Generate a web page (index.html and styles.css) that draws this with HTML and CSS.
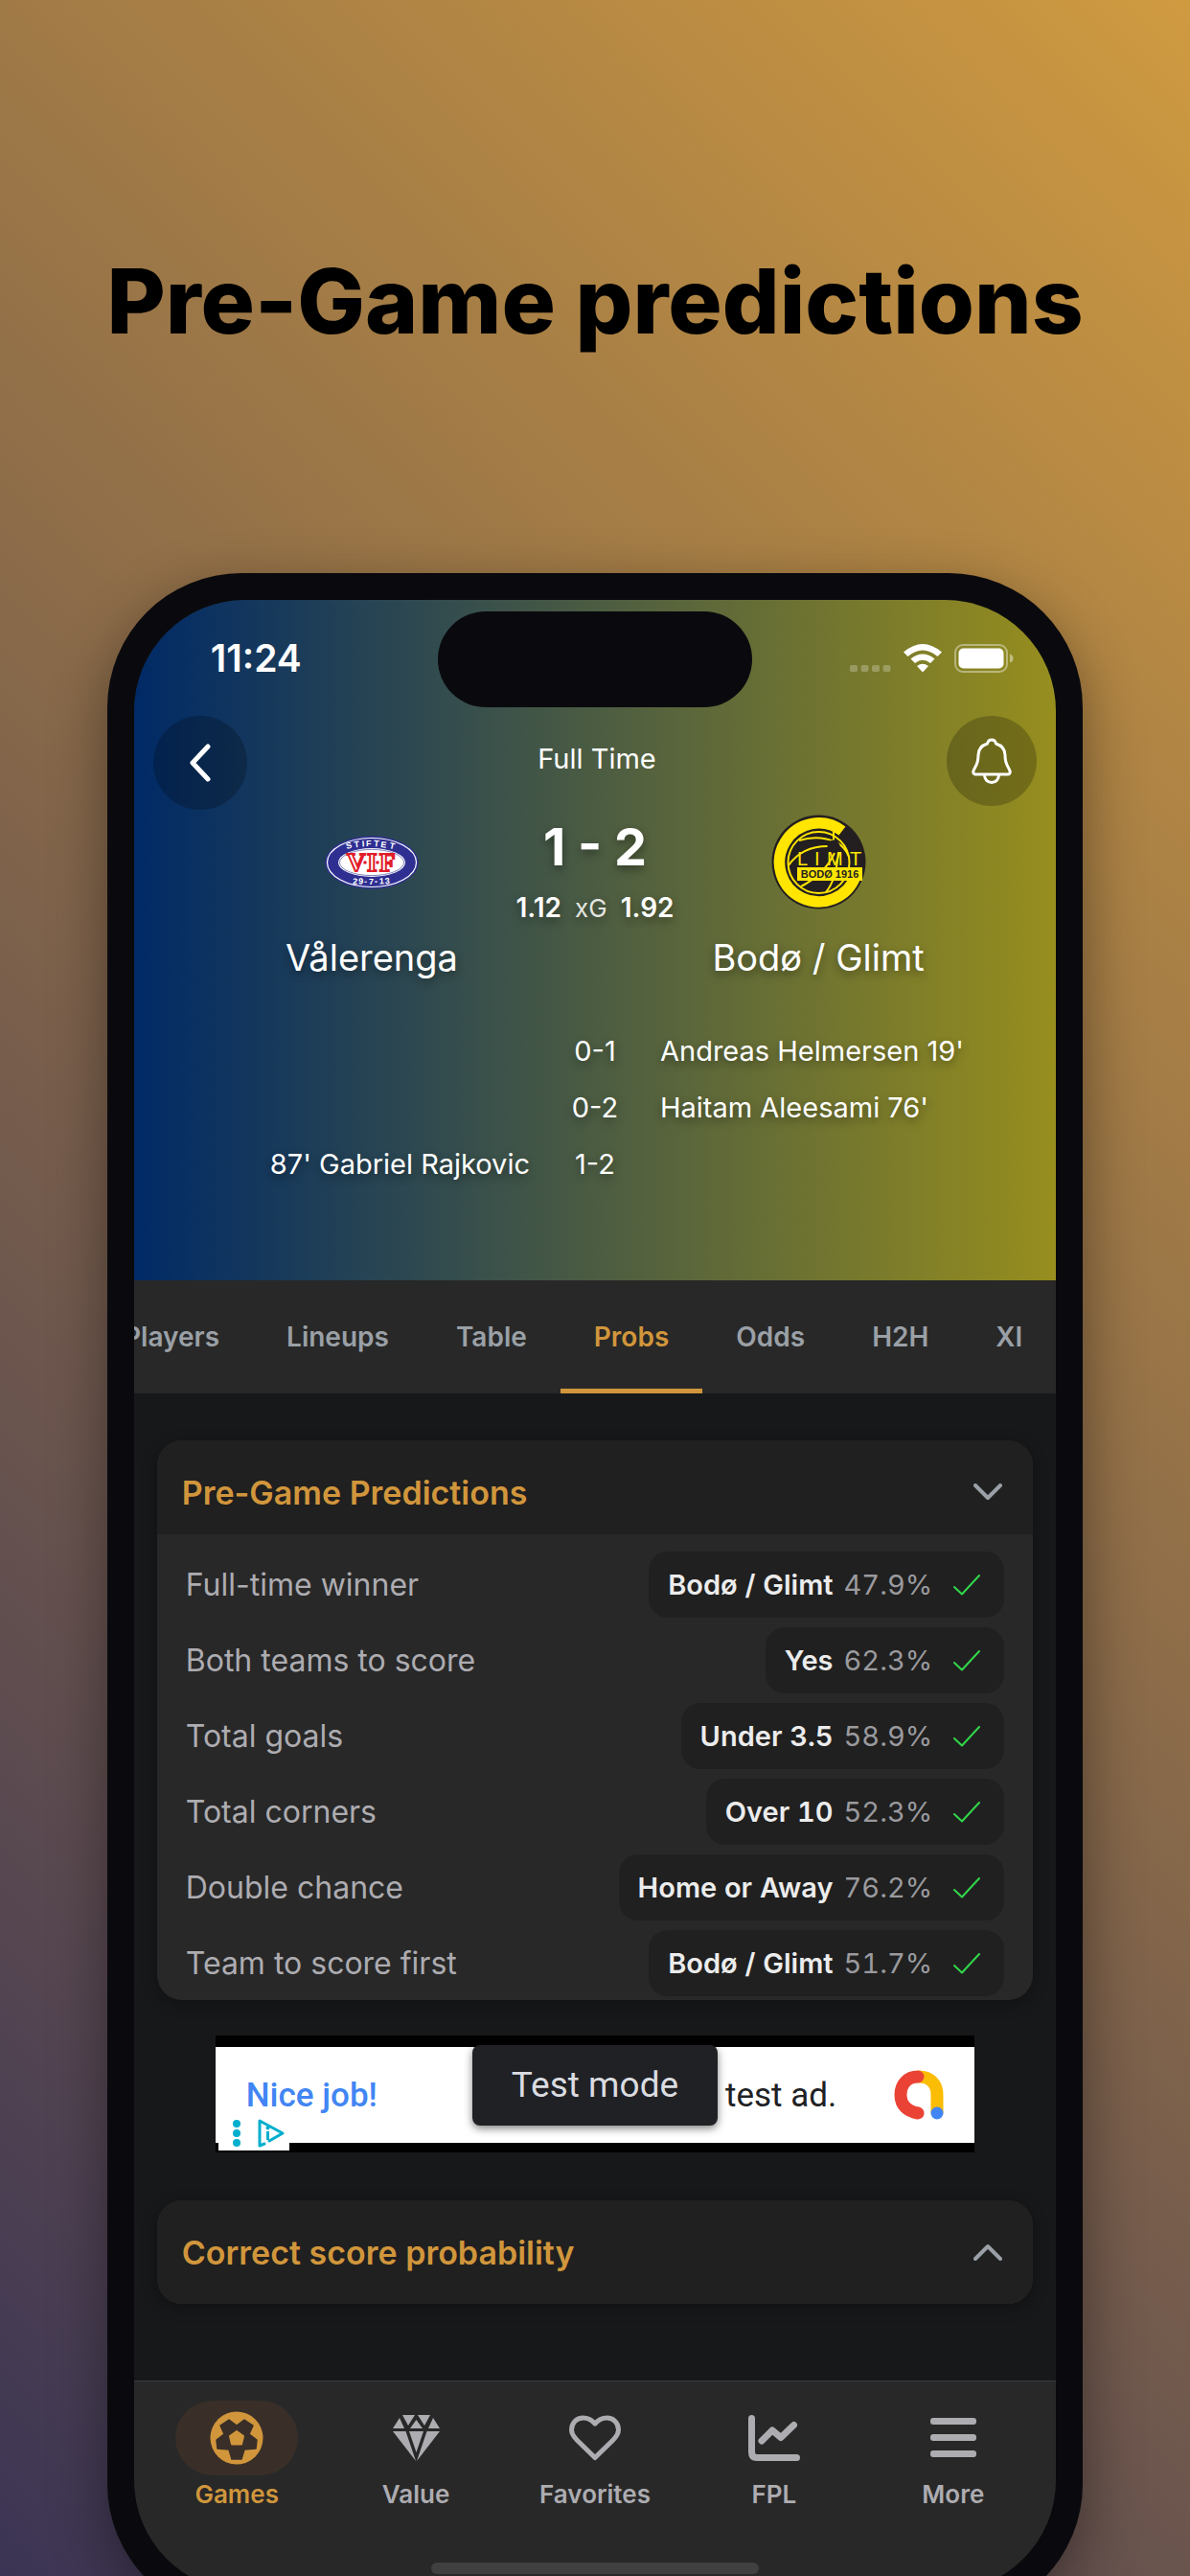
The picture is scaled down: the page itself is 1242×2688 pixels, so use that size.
FILE: index.html
```html
<!DOCTYPE html>
<html lang="en">
<head>
    <meta charset="UTF-8">
    <meta name="viewport" content="width=device-width, initial-scale=1.0">
    <title>Pre-Game predictions</title>
    <link rel="stylesheet" href="styles.css">
</head>
<body>
    <h1 class="headline">Pre-Game predictions</h1>

    <div class="phone">
        <div class="island"></div>
        <div class="screen">
            <header class="hero">
                <div class="status">
                    <span class="clock">11:24</span>
                    <div class="status-icons">
                        <svg width="43" height="30" viewBox="0 0 43 30" fill="#fff" opacity=".25">
                            <rect x="0" y="22" width="8" height="7" rx="2"/><rect x="11.500" y="22" width="8" height="7" rx="2"/>
                            <rect x="23" y="22" width="8" height="7" rx="2"/><rect x="34.500" y="22" width="8" height="7" rx="2"/>
                        </svg>
                        <svg width="40" height="30" viewBox="0 0 40 30" fill="#fff">
                            <path d="M0 8.500Q20 -8.500 40 8.500L35.500 13Q20 0 4.500 13Z"/>
                            <path d="M7.500 15.500Q20 5.500 32.500 15.500L28 20Q20 13.500 12 20Z"/>
                            <path d="M14 23Q20 18.500 26 23L20 29.500Z"/>
                        </svg>
                        <svg width="62" height="30" viewBox="0 0 62 30">
                            <rect x="1" y="1" width="54" height="28" rx="8" fill="none" stroke="#fff" stroke-opacity=".4" stroke-width="2"/>
                            <rect x="4.500" y="4.500" width="47" height="21" rx="5" fill="#fff"/>
                            <path d="M58 10.500Q61.500 12 61.500 15T58 19.500Z" fill="#fff" fill-opacity=".45"/>
                        </svg>
                    </div>
                </div>

                <div class="topbar">
                    <button class="round back" aria-label="Back">
                        <svg width="24" height="40" viewBox="0 0 24 40"><path d="M20 3L4 20L20 37" fill="none" stroke="#fff" stroke-width="5" stroke-linecap="round" stroke-linejoin="round"/></svg>
                    </button>
                    <span class="state">Full Time</span>
                    <button class="round bell" aria-label="Notifications">
                        <svg width="42" height="48" viewBox="0 0 42 48" fill="none" stroke="#fff" stroke-width="3" stroke-linejoin="round">
                            <path d="M21 2C18.500 2 17 3.500 16.500 6C10 8 7 12 7 18C7 29 3.500 29 1.800 35Q1.500 38 4.500 38H37.500Q40.500 38 40.200 35C38.500 29 35 29 35 18C35 12 32 8 25.500 6C25 3.500 23.500 2 21 2Z"/>
                            <path d="M13.500 38.500C13.500 43 16.500 46.500 21 46.500S28.500 43 28.500 38.500"/>
                        </svg>
                    </button>
                </div>

                <div class="match">
                    <div class="team">
                        <div class="crest">
                            <svg width="98" height="56" viewBox="0 0 98 56">
                                <ellipse cx="49" cy="28" rx="48.500" ry="27.500" fill="#2f2f92"/>
                                <ellipse cx="49" cy="28" rx="46.500" ry="25.500" fill="none" stroke="#fff" stroke-width="1.200"/>
                                <ellipse cx="49" cy="28" rx="35" ry="15" fill="#fff"/>
                                <ellipse cx="49" cy="28" rx="33.500" ry="13.600" fill="none" stroke="#2f2f92" stroke-width=".6"/>
                                <text class="crest-ring" x="23 31 39 43 51 58 67" y="14 12.500 11.500 11 11 12 13" rotate="-15 -8 -4 0 4 8 14">STIFTET</text>
                                <text class="crest-ring" x="29 35 41 46 52 57 63" y="50.500" rotate="4 3 1 0 -1 -3 -5">29-7-13</text>
                                <text class="vif" x="23 44 57" y="37">VIF</text>
                                <circle cx="42" cy="28" r="1.800" fill="#e11d2a"/><circle cx="55" cy="28" r="1.800" fill="#e11d2a"/>
                            </svg>
                        </div>
                        <span class="team-name">Vålerenga</span>
                    </div>
                    <div class="score">
                        <strong class="result">1 - 2</strong>
                        <div class="xg"><b>1.12</b> <span>xG</span> <b>1.92</b></div>
                    </div>
                    <div class="team">
                        <div class="crest">
                            <svg width="99" height="99" viewBox="0 0 99 99">
                                <circle cx="49.500" cy="49.500" r="49" fill="#231f20"/>
                                <path d="M74 17A41 41 0 1 0 88 64" fill="none" stroke="#ffe500" stroke-width="11.500"/>
                                <g fill="none" stroke="#ffe500" stroke-width="2">
                                    <circle cx="49.500" cy="50" r="32"/>
                                    <path d="M29 27Q48 21 66 28Q77 33 81 44"/>
                                    <path d="M18 53Q32 33 59 33"/>
                                    <path d="M65 15V27"/>
                                    <path d="M31 75Q56 62 66 40M57 81Q68 68 70 39"/>
                                </g>
                                <circle cx="65" cy="33" r="6.500" fill="#231f20"/>
                                <text class="limt" x="27 45 58 82" y="53">LIMT</text>
                                <rect x="27" y="55" width="68" height="14" fill="#ffe500"/>
                                <text class="bodo" x="61" y="66" text-anchor="middle">BODØ 1916</text>
                            </svg>
                        </div>
                        <span class="team-name">Bodø / Glimt</span>
                    </div>
                </div>

                <ul class="goals">
                    <li><span></span><span>0-1</span><span>Andreas Helmersen 19'</span></li>
                    <li><span></span><span>0-2</span><span>Haitam Aleesami 76'</span></li>
                    <li><span>87' Gabriel Rajkovic</span><span>1-2</span><span></span></li>
                </ul>
            </header>

            <nav class="tabs">
                <a href="#players">Players</a>
                <a href="#lineups">Lineups</a>
                <a href="#table">Table</a>
                <a href="#probs" class="active">Probs</a>
                <a href="#odds">Odds</a>
                <a href="#h2h">H2H</a>
                <a href="#xi">XI</a>
            </nav>

            <main class="content">
                <section class="card">
                    <button class="card-head open" aria-expanded="true">
                        <span>Pre-Game Predictions</span>
                        <svg width="30" height="18" viewBox="0 0 30 18"><path d="M2 2L15 15L28 2" fill="none" stroke="#9aa0a6" stroke-width="4" stroke-linecap="round" stroke-linejoin="round"/></svg>
                    </button>
                    <dl class="preds">
                        <div><dt>Full-time winner</dt><dd><b>Bodø / Glimt</b> <span>47.9%</span> <svg class="tick" viewBox="0 0 28 22"><path d="M1 13L9 20.500L27 1"/></svg></dd></div>
                        <div><dt>Both teams to score</dt><dd><b>Yes</b> <span>62.3%</span> <svg class="tick" viewBox="0 0 28 22"><path d="M1 13L9 20.500L27 1"/></svg></dd></div>
                        <div><dt>Total goals</dt><dd><b>Under 3.5</b> <span>58.9%</span> <svg class="tick" viewBox="0 0 28 22"><path d="M1 13L9 20.500L27 1"/></svg></dd></div>
                        <div><dt>Total corners</dt><dd><b>Over 10</b> <span>52.3%</span> <svg class="tick" viewBox="0 0 28 22"><path d="M1 13L9 20.500L27 1"/></svg></dd></div>
                        <div><dt>Double chance</dt><dd><b>Home or Away</b> <span>76.2%</span> <svg class="tick" viewBox="0 0 28 22"><path d="M1 13L9 20.500L27 1"/></svg></dd></div>
                        <div><dt>Team to score first</dt><dd><b>Bodø / Glimt</b> <span>51.7%</span> <svg class="tick" viewBox="0 0 28 22"><path d="M1 13L9 20.500L27 1"/></svg></dd></div>
                    </dl>
                </section>

                <aside class="ad">
                    <div class="ad-body">
                        <span class="ad-title">Nice job!</span>
                        <span class="ad-text">test ad.</span>
                        <svg width="52" height="52" viewBox="0 0 52 52" fill="none" stroke-width="13" stroke-linecap="round">
                            <path d="M26 7C38 7 45 15 45 26V44" stroke="#fbbc04"/>
                            <path d="M25 7C14 7 7 15 7 26S14 43 25 45" stroke="#ea4335"/>
                            <circle cx="45" cy="45" r="6.500" fill="#4285f4"/>
                        </svg>
                    </div>
                    <div class="ad-mode">Test mode</div>
                    <div class="ad-choices">
                        <svg width="62" height="32" viewBox="0 0 62 32">
                            <g fill="#00aecd"><circle cx="11" cy="6" r="4"/><circle cx="11" cy="16" r="4"/><circle cx="11" cy="26" r="4"/><rect x="42" y="14" width="3" height="9"/><circle cx="43.500" cy="10.500" r="2"/></g>
                            <path d="M40 27L35 29V3L59 16L45 24" fill="none" stroke="#00aecd" stroke-width="3" stroke-linejoin="round" stroke-linecap="round"/>
                        </svg>
                    </div>
                </aside>

                <section class="card">
                    <button class="card-head" aria-expanded="false">
                        <span>Correct score probability</span>
                        <svg width="30" height="18" viewBox="0 0 30 18"><path d="M2 16L15 3L28 16" fill="none" stroke="#9aa0a6" stroke-width="4" stroke-linecap="round" stroke-linejoin="round"/></svg>
                    </button>
                </section>
            </main>

            <nav class="bottom-nav">
                <a href="#games" class="active">
                    <span class="nav-icon">
                        <svg width="56" height="56" viewBox="-28 -28 56 56">
                            <circle r="27.500" fill="#d1963c"/>
                            <path d="M-8 -19L0 -13L8 -19L17 -13L13 -4L21 2L20 11L8 12L5 22H-5L-8 12L-20 11L-21 2L-13 -4L-17 -13Z" fill="#392f28" stroke="#392f28" stroke-width="1.500" stroke-linejoin="round"/>
                            <path d="M0 -7L7 -2L5 6.500H-5L-7 -2Z" fill="#d1963c" stroke="#d1963c" stroke-width="2" stroke-linejoin="round"/>
                        </svg>
                    </span>
                    Games
                </a>
                <a href="#value">
                    <span class="nav-icon">
                        <svg width="49" height="48" viewBox="0 0 49 48" fill="#adacb1">
                            <path d="M0 14L7 3L12 14ZM10 0H23L16 11ZM24.500 5L31 14H18ZM26 0H39L33 11ZM49 14L42 3L37 14Z"/>
                            <path d="M0 17H13.500L24 48ZM17 17H32L24.500 39ZM49 17H35.500L25 48Z"/>
                        </svg>
                    </span>
                    Value
                </a>
                <a href="#favorites">
                    <span class="nav-icon">
                        <svg width="54" height="48" viewBox="0 0 54 48"><path d="M27 44.500L8.500 26.500C4 22 2.500 19.500 2.500 15.500C2.500 8 8 3 14.500 3C20 3 24 5.500 27 9C30 5.500 34 3 39.500 3C46 3 51.500 8 51.500 15.500C51.500 19.500 50 22 45.500 26.500Z" fill="none" stroke="#adacb1" stroke-width="5" stroke-linejoin="round"/></svg>
                    </span>
                    Favorites
                </a>
                <a href="#fpl">
                    <span class="nav-icon">
                        <svg width="54" height="48" viewBox="0 0 54 48" fill="none" stroke="#adacb1" stroke-width="7" stroke-linecap="round" stroke-linejoin="round"><path d="M3.500 3.500V39Q3.500 44.500 9 44.500H50.500"/><path d="M14 27L25 16L34 23.500L47.500 10.500"/></svg>
                    </span>
                    FPL
                </a>
                <a href="#more">
                    <span class="nav-icon">
                        <svg width="48" height="42" viewBox="0 0 48 42" fill="#adacb1"><rect width="48" height="7" rx="3"/><rect y="17" width="48" height="7" rx="3"/><rect y="34" width="48" height="7" rx="3"/></svg>
                    </span>
                    More
                </a>
                <div class="home-bar"></div>
            </nav>
        </div>
    </div>
</body>
</html>
```
FILE: styles.css
```css
* {
    box-sizing: border-box;
}
body {
    margin: 0;
    height: 100vh;
    overflow: hidden;
    font-family: Inter, Roboto, sans-serif;
    background: linear-gradient(225deg, #cf9a40, #3b3454);
}
a {
    color: inherit;
    text-decoration: none;
}
button {
    border: 0;
    padding: 0;
    font: inherit;
    cursor: pointer;
}
svg {
    display: block;
    flex: none;
}
.headline {
    margin: 0;
    padding: 254px 0 224px;
    font-size: 94px;
    line-height: 120px;
    font-weight: 800;
    text-align: center;
    white-space: nowrap;
    color: #000;
}

/* device frame */
.phone {
    position: relative;
    margin: 0 9%;
    padding: 28px;
    border-radius: 140px;
    background: #0a0a0e;
    box-shadow: 0 20px 60px rgba(0, 0, 0, 0.4);
}
.island {
    position: absolute;
    top: 40px;
    left: 50%;
    width: 328px;
    height: 100px;
    margin-left: -164px;
    border-radius: 50px;
    background: #0a0a0e;
}
.screen {
    border-radius: 116px;
    overflow: hidden;
    background: #17181a;
}

/* match header */
.hero {
    padding-bottom: 90px;
    color: #fff;
    background: linear-gradient(90deg, #002a66, #978e1e);
}
.status {
    display: flex;
    justify-content: space-between;
    align-items: center;
    height: 121px;
    padding: 0 44px 0 80px;
}
.clock {
    font-size: 39px;
    font-weight: 600;
}
.status-icons {
    display: flex;
    gap: 13px;
}
.topbar {
    display: flex;
    justify-content: space-between;
    align-items: flex-start;
    height: 103px;
    padding: 0 20px;
}
.round {
    display: flex;
    align-items: center;
    justify-content: center;
    border-radius: 50%;
    background: rgba(0, 0, 0, 0.22);
}
.back {
    width: 98px;
    height: 98px;
}
.bell {
    width: 94px;
    height: 94px;
}
.state {
    font-size: 29px;
    line-height: 90px;
}
.match {
    display: grid;
    grid-template-columns: 280px 186px 280px;
    justify-content: center;
    text-align: center;
    text-shadow: 0 4px 10px rgba(0, 0, 0, 0.4);
}
.team {
    display: flex;
    flex-direction: column;
    gap: 24px;
}
.crest {
    display: flex;
    align-items: center;
    justify-content: center;
    height: 99px;
}
.crest text {
    text-shadow: none;
}
.crest-ring {
    font: bold 9px "Liberation Sans", sans-serif;
    fill: #fff;
}
.vif {
    font: bold 27px "Liberation Serif", serif;
    fill: #fff;
    stroke: #e11d2a;
    stroke-width: 2;
}
.limt {
    font: 20px "Liberation Sans", sans-serif;
    fill: #ffe500;
}
.bodo {
    font: bold 11px "Liberation Sans", sans-serif;
    fill: #231f20;
}
.team-name {
    font-size: 38px;
    line-height: 52px;
    white-space: nowrap;
}
.score {
    display: flex;
    flex-direction: column;
    gap: 13px;
}
.result {
    font-size: 54px;
    line-height: 68px;
}
.xg {
    display: flex;
    justify-content: center;
    align-items: baseline;
    gap: 14px;
    font-size: 28px;
    line-height: 32px;
}
.xg b {
    font-weight: 600;
}
.xg span {
    font-size: 26px;
    opacity: 0.85;
}
.goals {
    list-style: none;
    margin: 42px 0 2px;
    padding: 0;
    font-size: 29px;
    line-height: 59px;
    text-shadow: 0 4px 10px rgba(0, 0, 0, 0.4);
}
.goals li {
    display: grid;
    grid-template-columns: 1fr 136px 1fr;
    text-align: center;
    white-space: nowrap;
}
.goals span:first-child {
    text-align: right;
}
.goals span:last-child {
    text-align: left;
}

/* section tabs */
.tabs {
    display: flex;
    justify-content: flex-end;
    overflow: hidden;
    background: #282828;
    color: #9aa0a6;
    font-size: 28px;
    font-weight: 600;
    line-height: 118px;
}
.tabs a {
    padding: 0 35px;
}
.tabs .active {
    color: #d1963c;
    box-shadow: inset 0 -5px #d1963c;
}

.content {
    padding: 49px 24px 80px;
}
.card {
    border-radius: 26px;
    overflow: hidden;
    background: #282828;
    box-shadow: 0 4px 16px rgba(0, 0, 0, 0.3);
}
.card-head {
    display: flex;
    justify-content: space-between;
    align-items: center;
    width: 100%;
    height: 108px;
    padding: 0 32px 0 26px;
    background: #202020;
    color: #d1963c;
    font-size: 34px;
    font-weight: 600;
}
.card-head.open {
    height: 98px;
    padding-top: 10px;
}
.preds {
    margin: 0;
    padding: 18px 30px 4px;
    display: flex;
    flex-direction: column;
    gap: 10px;
}
.preds div {
    display: flex;
    justify-content: space-between;
    align-items: center;
    height: 69px;
}
.preds dt {
    font-size: 32px;
    color: #adacb1;
}
.preds dd {
    display: flex;
    align-items: center;
    gap: 11px;
    height: 69px;
    margin: 0;
    padding: 0 25px 0 20px;
    border-radius: 20px;
    background: #202020;
    font-size: 29px;
    font-variant-numeric: tabular-nums;
    color: #9a9a9e;
}
.preds b {
    font-weight: 600;
    color: #ececec;
}
.tick {
    width: 28px;
    height: 22px;
    margin-left: 11px;
    fill: none;
    stroke: #32d74b;
    stroke-width: 2;
    stroke-linecap: round;
    stroke-linejoin: round;
}

/* test banner */
.ad {
    position: relative;
    margin: 37px 61px 50px;
    padding: 12px 0 10px;
    background: #000;
    font-family: Roboto, sans-serif;
}
.ad-body {
    display: flex;
    align-items: center;
    height: 100px;
    padding: 0 32px;
    background: #fff;
    font-size: 35px;
    font-weight: 500;
}
.ad-title {
    color: #4285f4;
}
.ad-text {
    margin-left: auto;
    margin-right: 60px;
    color: #202124;
    font-weight: 400;
}
.ad-mode {
    position: absolute;
    top: 10px;
    left: 50%;
    width: 256px;
    margin-left: -128px;
    border-radius: 8px;
    background: #202125;
    box-shadow: 0 3px 8px rgba(0, 0, 0, 0.5);
    color: #dadce0;
    font-size: 37px;
    line-height: 84px;
    text-align: center;
}
.ad-choices {
    position: absolute;
    left: 3px;
    bottom: 2px;
    padding: 1px 0 2px 8px;
    width: 74px;
    background: #fff;
}

/* bottom navigation */
.bottom-nav {
    position: relative;
    display: grid;
    grid-template-columns: repeat(5, 1fr);
    height: 220px;
    padding: 20px 14px 0;
    border-top: 1px solid #3c3c3c;
    background: #282828;
    color: #adacb1;
    font-size: 26px;
    font-weight: 600;
    line-height: 40px;
}
.bottom-nav a {
    display: flex;
    flex-direction: column;
    align-items: center;
}
.nav-icon {
    display: flex;
    align-items: center;
    justify-content: center;
    width: 128px;
    height: 78px;
    border-radius: 39px;
}
.bottom-nav .active {
    color: #d1963c;
}
.active .nav-icon {
    background: #392f28;
}
.home-bar {
    position: absolute;
    top: 189px;
    left: 50%;
    width: 342px;
    height: 12px;
    margin-left: -171px;
    border-radius: 6px;
    background: #404040;
}
```
